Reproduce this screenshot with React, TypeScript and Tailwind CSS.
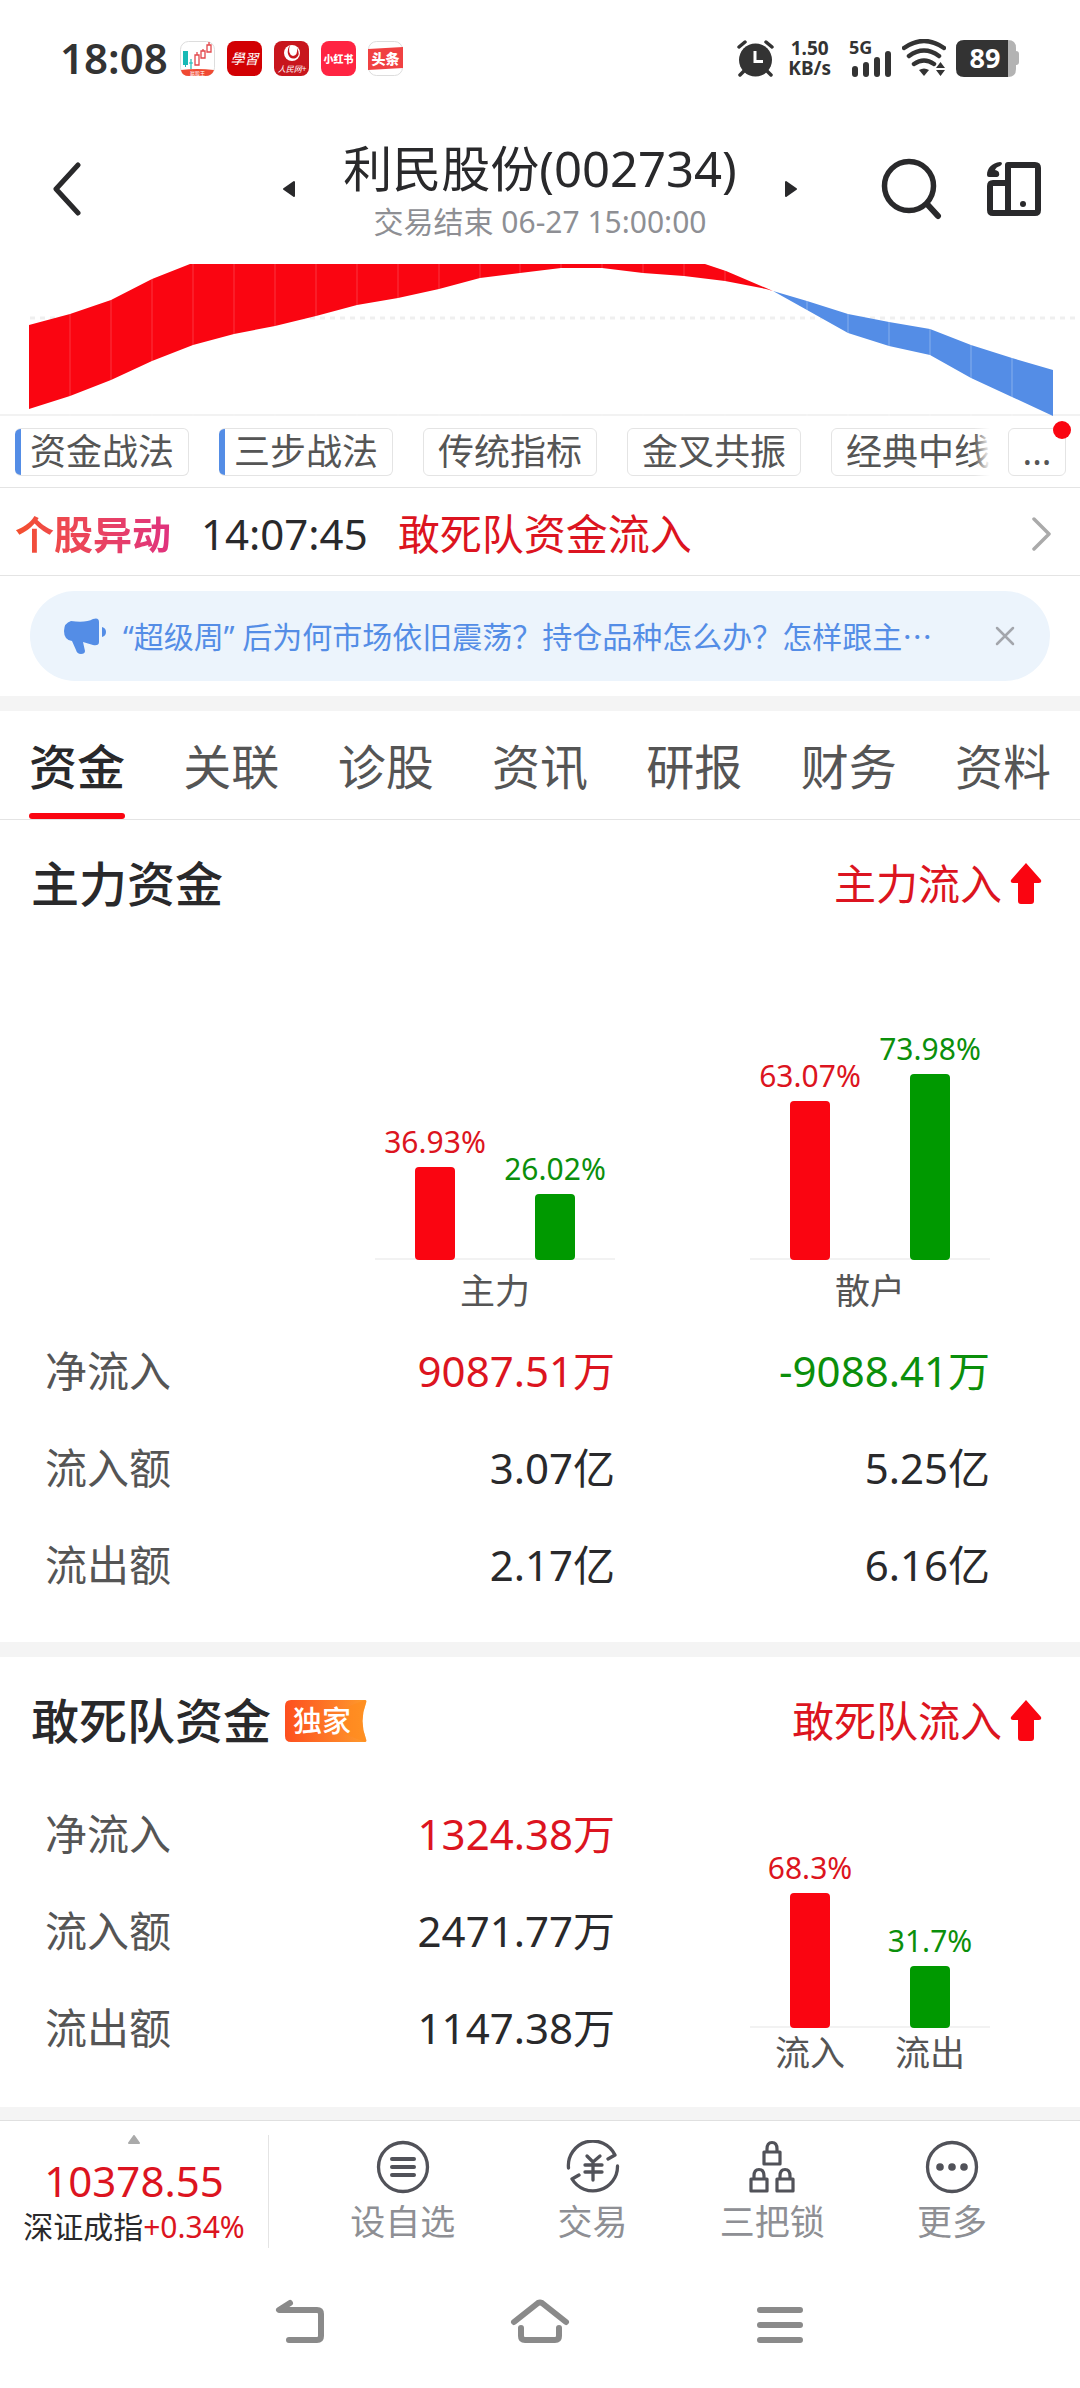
import { useState } from 'react';

const chips = [
  { name: '资金战法', marked: true },
  { name: '三步战法', marked: true },
  { name: '传统指标', marked: false },
  { name: '金叉共振', marked: false },
  { name: '经典中线', marked: false },
];

const tabs = ['资金', '关联', '诊股', '资讯', '研报', '财务', '资料'];

const mainRows = [
  { label: '净流入', main: '9087.51万', retail: '-9088.41万' },
  { label: '流入额', main: '3.07亿', retail: '5.25亿' },
  { label: '流出额', main: '2.17亿', retail: '6.16亿' },
];

const squadRows = [
  { label: '净流入', value: '1324.38万' },
  { label: '流入额', value: '2471.77万' },
  { label: '流出额', value: '1147.38万' },
];

// x positions of the vertical seams in the two areas of the trend chart
const redSeams = [70, 111, 152, 193, 234, 275, 316, 357, 398, 439, 480, 520, 561, 602, 643, 684, 725];
const blueSeams = [807, 848, 889, 930, 971, 1012];

const StatusBar = () => (
  <div className="flex items-center justify-between pl-[60px] pr-[61px] pt-[36px] h-[80px] text-[#333]">
    <div className="flex items-center gap-3">
      <span className="text-[42px] leading-[44px] font-semibold">18:08</span>
      <svg width="35" height="35" viewBox="0 0 35 35">
        <rect x="0.5" y="0.5" width="34" height="34" rx="8" fill="#fff" stroke="#ddd" />
        <path d="M1 29q16-2 33 0-2 6-9 6H9q-7 0-8-6z" fill="#f04a32" />
        <path d="M3 10h5v14H3zM5 24h1v2H5z" fill="#18b9b5" />
        <path d="M11 18v10M9 22h4" stroke="#18b9b5" strokeWidth="1.2" />
        <path d="M15 14h4v10h-4zM21 10h4v7h-4zM27 4h4v7h-4zM17 11v3M23 8v2M29 1v3" fill="none" stroke="#e2484c" strokeWidth="1.3" />
        <text x="17.5" y="34" fontSize="5" fill="#fff" textAnchor="middle">赢股王</text>
      </svg>
      <svg width="35" height="35" viewBox="0 0 35 35">
        <rect width="35" height="35" rx="8" fill="#d20003" />
        <text x="17.5" y="23" fontSize="14" fill="#fff" textAnchor="middle" fontStyle="italic">學習</text>
      </svg>
      <svg width="35" height="35" viewBox="0 0 35 35">
        <rect width="35" height="35" rx="8" fill="#c8161d" />
        <circle cx="18" cy="12" r="8" fill="#fff" />
        <path d="M16 4q-3 9 3 11 5-1 4-8 4 7-1 10-6 2-8-4-1-5 2-9z" fill="#c8161d" />
        <text x="18" y="31" fontSize="8" fill="#fff" textAnchor="middle" fontStyle="italic">人民网+</text>
      </svg>
      <svg width="35" height="35" viewBox="0 0 35 35">
        <rect width="35" height="35" rx="8" fill="#ff2442" />
        <text x="17.5" y="22" fontSize="10" fontWeight="800" fill="#fff" textAnchor="middle">小红书</text>
      </svg>
      <svg width="35" height="35" viewBox="0 0 35 35">
        <rect x="0.5" y="0.5" width="34" height="34" rx="8" fill="#fff" stroke="#ddd" />
        <path d="M0 8l35-2v21L0 29z" fill="#f04142" />
        <text x="17.5" y="23" fontSize="14" fontWeight="800" fill="#fff" textAnchor="middle">头条</text>
      </svg>
    </div>
    <div className="flex items-center">
      <svg width="37" height="37" viewBox="0 0 37 37" className="mr-[14px]">
        <circle cx="18.500" cy="20" r="16.500" fill="#333" />
        <path d="M2 7l6-5M35 7l-6-5M3 35l4-4M34 35l-4-4" stroke="#333" strokeWidth="3.500" strokeLinecap="round" />
        <path d="M18 11v10.500h8" fill="none" stroke="#fff" strokeWidth="3" />
      </svg>
      <div className="flex flex-col text-[19px] leading-[20px] font-bold text-center mr-[18px]">
        <span>1.50</span>
        <span>KB/s</span>
      </div>
      <svg width="43" height="38" viewBox="0 0 43 38" className="mr-[10px] overflow-visible">
        <text x="0" y="15" fontSize="18" fontWeight="700" fill="#333">5G</text>
        <path d="M6 30v5M17 26v9M28 21v14M39 15v20" stroke="#333" strokeWidth="6" strokeLinecap="round" />
      </svg>
      <svg width="44" height="38" viewBox="0 0 44 38" className="mr-[10px]">
        <path d="M2 9q20-14 40 0M7 17q15-11 30 0M12 25q10-7 20 0" fill="none" stroke="#333" strokeWidth="4.500" strokeLinecap="round" />
        <path d="M17 31q5-3 10 0l-5 6z" fill="#333" />
        <path d="M34 29l4.500-6 4.500 6zM34 31l4.500 6 4.500-6z" fill="#333" />
      </svg>
      <svg width="63" height="37" viewBox="0 0 63 37" className="overflow-visible">
        <path d="M50 0h2q8 0 8 8v3q3 0 3 3v8q0 3-3 3v4q0 8-8 8h-2z" fill="#b3b3b3" />
        <path d="M8 0h44v37H8q-8 0-8-8V8q0-8 8-8z" fill="#333" />
        <text x="29" y="28" fontSize="27" fontWeight="700" fill="#fff" textAnchor="middle">89</text>
      </svg>
    </div>
  </div>
);

const UpArrow = () => (
  <svg width="32" height="42" viewBox="0 0 32 42">
    <path d="M16 0l15 17q1 3-2 3h-5v18q0 3-3 3H11q-3 0-3-3V20H3q-3 0-2-3z" fill="#fa0511" />
  </svg>
);

const Bar = ({ percent, scale, up }: { percent: number; scale: number; up: boolean }) => (
  <div className="flex-1 flex flex-col items-center">
    <span className={`text-[30px] leading-[42px] mb-1 ${up ? 'text-[#dc1420]' : 'text-[#0b8f0b]'}`}>
      {percent}%
    </span>
    <div
      className={`w-10 rounded-[4px] ${up ? 'bg-[#fa0511]' : 'bg-[#009900]'}`}
      style={{ height: Math.round(percent * scale) }}
    />
  </div>
);

const BarGroup = ({ up, down, scale }: { up: number; down: number; scale: number }) => (
  <div className="relative flex items-end w-[240px] ml-auto">
    <div className="absolute bottom-0 w-full h-[2px] bg-[#f2f2f2]" />
    <div className="relative flex items-end w-full">
      <Bar percent={up} scale={scale} up />
      <Bar percent={down} scale={scale} up={false} />
    </div>
  </div>
);

const Lock = ({ x, y }: { x: number; y: number }) => (
  <path
    d={`M${x + 2} ${y + 11}h16v12h-16zM${x + 5} ${y + 11}v-3q0-6.500 5-6.500t5 6.500v3`}
    fill="none"
    stroke="#515259"
    strokeWidth="3.200"
    strokeLinejoin="round"
  />
);

const App = () => {
  const [activeTab, setActiveTab] = useState('资金');
  const [showNotice, setShowNotice] = useState(true);

  return (
    <div className="min-h-screen bg-white text-[#29292b] overflow-x-hidden font-['Noto_Sans','Noto_Sans_CJK_SC',sans-serif]">
      <StatusBar />

      {/* Title */}
      <header className="relative flex items-center justify-between h-[184px] pt-[34px] pl-[52px] pr-[39px]">
        <button aria-label="返回">
          <svg width="30" height="54" viewBox="0 0 30 54">
            <path d="M26 3L4 27l22 24" fill="none" stroke="#29292b" strokeWidth="5" strokeLinecap="round" strokeLinejoin="round" />
          </svg>
        </button>
        <div className="absolute inset-x-0 mx-auto w-fit flex items-center gap-[48px]">
          <button aria-label="上一只">
            <svg width="12" height="18" viewBox="0 0 12 18">
              <path d="M11 2v14L1 9z" fill="#29292b" stroke="#29292b" strokeWidth="2" strokeLinejoin="round" />
            </svg>
          </button>
          <div className="pt-1 text-center">
            <h1 className="text-[49px] leading-[62px]">利民股份(002734)</h1>
            <p className="text-[30px] leading-[46px] text-[#8e8f94]">交易结束 06-27 15:00:00</p>
          </div>
          <button aria-label="下一只">
            <svg width="12" height="18" viewBox="0 0 12 18">
              <path d="M1 2v14l10-7z" fill="#29292b" stroke="#29292b" strokeWidth="2" strokeLinejoin="round" />
            </svg>
          </button>
        </div>
        <div className="flex items-center gap-[44px]">
          <button aria-label="搜索">
            <svg width="62" height="62" viewBox="0 0 62 62">
              <circle cx="28" cy="28" r="24.500" fill="none" stroke="#29292b" strokeWidth="5.500" />
              <path d="M46 46l11 12" stroke="#29292b" strokeWidth="6" strokeLinecap="round" />
            </svg>
          </button>
          <button aria-label="持仓">
            <svg width="54" height="54" viewBox="0 0 54 54">
              <path d="M21 3h27q3 0 3 3v42q0 3-3 3H21zM21 21H6q-3 0-3 3v24q0 3 3 3h15" fill="none" stroke="#29292b" strokeWidth="6" strokeLinejoin="round" />
              <circle cx="36" cy="42" r="3" fill="#29292b" />
              <path d="M13 0C5 1 0 6 0 13q0 2 2 2h8q3-1 2-4 0-2-4-3 1-3 5-4 2-1 2-3-1-1-2-1z" fill="#29292b" />
            </svg>
          </button>
        </div>
      </header>

      {/* Trend chart */}
      <svg viewBox="0 0 1080 152" className="block w-full">
        <path d="M30 54H1080" stroke="#efefef" strokeWidth="3" strokeDasharray="5 5" />
        <path d="M0 151H1080" stroke="#f2f2f2" strokeWidth="2" />
        <path
          d="M29 61L70 50 111 36 152 15 190 0H705L726 7 773 27 766 25 725 17 684 12 643 9 602 4H561L520 9 480 14 439 25 398 34 357 41 316 52 275 62 234 70 193 81 152 97 111 116 70 132 29 145z"
          fill="#fa0511"
        />
        <path
          d="M773 27L807 37 848 50 889 58 930 65 971 81 1012 94 1053 106V152L1012 133 971 114 930 91 889 82 848 69 807 46z"
          fill="#548de6"
        />
        {redSeams.map((x) => (
          <path key={x} d={`M${x} 0V152`} stroke="#fff" strokeOpacity="0.200" />
        ))}
        {blueSeams.map((x) => (
          <path key={x} d={`M${x} 0V152`} stroke="#fff" strokeOpacity="0.300" />
        ))}
      </svg>

      {/* Indicator chips */}
      <div className="relative flex items-center justify-between h-[72px] pl-[15px] pr-[14px] border-b border-[#e4e4e4]">
        <div className="relative flex-1 min-w-0 overflow-hidden flex gap-[30px] mr-[18px]">
          {chips.map((chip) => (
            <button
              key={chip.name}
              className={`shrink-0 h-12 text-[36px] leading-[46px] text-[#555] rounded-[6px] border border-[#e4e4e4] ${
                chip.marked
                  ? 'border-l-0 pl-[15px] pr-[14px] bg-[linear-gradient(90deg,#548de6_6px,transparent_6px)]'
                  : 'px-[14px]'
              }`}
            >
              {chip.name}
            </button>
          ))}
          <div className="absolute right-0 top-0 h-12 w-4 bg-linear-to-r from-transparent to-white" />
        </div>
        <button className="w-[58px] h-12 text-[36px] leading-[46px] text-[#555] rounded-[6px] border border-[#e4e4e4]">
          ...
        </button>
        <span className="absolute right-[9px] top-[5px] size-[18px] rounded-full bg-[#fa0511]" />
      </div>

      {/* Stock alert */}
      <a href="#alert" className="flex items-center h-[88px] pt-1 pl-[15px] pr-7 border-b border-[#e4e4e4] text-[42px] leading-[60px]">
        <span className="text-[39px] font-bold bg-linear-to-r from-[#f4502c] to-[#e0327e] bg-clip-text text-transparent">
          个股异动
        </span>
        <span className="ml-[30px]">14:07:45</span>
        <span className="ml-[30px] text-[#dc1420]">敢死队资金流入</span>
        <svg width="20" height="34" viewBox="0 0 20 34" className="ml-auto">
          <path d="M2 2l15 15L2 32" fill="none" stroke="#aaa" strokeWidth="3.500" strokeLinecap="round" strokeLinejoin="round" />
        </svg>
      </a>

      {/* Notice */}
      <div className="h-[120px] px-[30px] py-[15px]">
        {showNotice && (
          <div className="flex items-center h-[90px] rounded-full bg-[#ecf4fc] pl-[34px] pr-[34px]">
            <svg width="43" height="36" viewBox="0 0 43 36" className="shrink-0">
              <path d="M7 3Q22 5 29 1q6-2 6 3v20q0 4-6 3l-10-3 2 9q0 3-4 3-4 0-5-4L8 23Q0 22 0 13 0 5 7 3zM38 9q4 1 4 5t-4 5z" fill="#548de6" />
            </svg>
            <p className="flex-1 min-w-0 ml-4 text-[30px] leading-[42px] text-[#548de6] whitespace-nowrap overflow-hidden font-['Noto_Sans_CJK_SC',sans-serif]">
              <span className="font-['Noto_Sans']">“</span>超级周<span className="font-['Noto_Sans']">” </span>后为何市场依旧震荡？持仓品种怎么办？怎样跟主…
            </p>
            <button aria-label="关闭" onClick={() => setShowNotice(false)}>
              <svg width="22" height="22" viewBox="0 0 22 22">
                <path d="M3 3l16 16M19 3L3 19" stroke="#a3a6ac" strokeWidth="2.500" strokeLinecap="round" />
              </svg>
            </button>
          </div>
        )}
      </div>

      <div className="h-[15px] bg-[#f4f4f4]" />

      {/* Tabs */}
      <nav className="flex justify-between h-[109px] px-[29px] border-b border-[#e4e4e4]">
        {tabs.map((tab) => (
          <button
            key={tab}
            onClick={() => setActiveTab(tab)}
            className={`relative pt-1 text-[48px] leading-[60px] ${
              activeTab === tab ? 'font-medium text-[#29292b]' : 'text-[#555]'
            }`}
          >
            {tab}
            {activeTab === tab && (
              <span className="absolute inset-x-0 bottom-0 h-[6px] rounded-full bg-[#fa0511]" />
            )}
          </button>
        ))}
      </nav>

      {/* Main capital */}
      <section>
        <div className="flex items-center justify-between h-[128px] pl-[31px] pr-[38px]">
          <h2 className="text-[48px] leading-[60px] font-medium">主力资金</h2>
          <div className="flex items-center gap-2 text-[42px] leading-[60px] text-[#dc1420]">
            主力流入
            <UpArrow />
          </div>
        </div>
        <table className="w-full table-fixed">
          <thead>
            <tr className="align-bottom">
              <td className="w-[240px]" />
              <th scope="col" className="p-0 font-normal h-[374px]">
                <BarGroup up={36.93} down={26.02} scale={2.52} />
                <div className="w-[240px] ml-auto text-center text-[35px] leading-[62px] text-[#555]">主力</div>
              </th>
              <th scope="col" className="p-0 font-normal">
                <BarGroup up={63.07} down={73.98} scale={2.52} />
                <div className="w-[240px] ml-auto text-center text-[35px] leading-[62px] text-[#555]">散户</div>
              </th>
              <td className="w-[90px]" />
            </tr>
          </thead>
          <tbody className="text-[42px] leading-[60px]">
            {mainRows.map((row, i) => (
              <tr key={row.label} className="h-[97px]">
                <th scope="row" className="p-0 pl-[45px] text-left font-normal text-[#555]">
                  {row.label}
                </th>
                <td className={`p-0 text-right ${i === 0 ? 'text-[#dc1420]' : ''}`}>{row.main}</td>
                <td className={`p-0 text-right ${i === 0 ? 'text-[#0b8f0b]' : ''}`}>{row.retail}</td>
                <td />
              </tr>
            ))}
          </tbody>
        </table>
      </section>

      <div className="mt-[29px] h-[15px] bg-[#f4f4f4]" />

      {/* Squad capital */}
      <section>
        <div className="flex items-center justify-between h-[128px] pl-[31px] pr-[38px]">
          <div className="flex items-center gap-[14px]">
            <h2 className="text-[48px] leading-[60px] font-medium">敢死队资金</h2>
            <svg width="82" height="42" viewBox="0 0 82 42">
              <defs>
                <linearGradient id="tag" x1="0" y1="0" x2="1" y2="0">
                  <stop offset="0" stopColor="#fd4f1f" />
                  <stop offset="1" stopColor="#fe9a2c" />
                </linearGradient>
              </defs>
              <path d="M6 0h74q2 0 1 3-7 18 0 36 1 3-1 3H6q-6 0-6-6V6q0-6 6-6z" fill="url(#tag)" />
              <path d="M60 8L80 0q2 0 1 3-7 18 0 36 1 3-1 3L60 34z" fill="#ff8a1c" fillOpacity="0.600" />
              <text x="37" y="32" fontSize="29" fontWeight="500" fill="#fff" textAnchor="middle">独家</text>
            </svg>
          </div>
          <div className="flex items-center gap-2 text-[42px] leading-[60px] text-[#dc1420]">
            敢死队流入
            <UpArrow />
          </div>
        </div>
        <div className="flex h-[293px]">
          <table className="flex-1 h-fit text-[42px] leading-[60px]">
            <tbody>
              {squadRows.map((row, i) => (
                <tr key={row.label} className="h-[97px]">
                  <th scope="row" className="p-0 pl-[45px] text-left font-normal text-[#555]">
                    {row.label}
                  </th>
                  <td className={`p-0 text-right ${i === 0 ? 'text-[#dc1420]' : ''}`}>{row.value}</td>
                </tr>
              ))}
            </tbody>
          </table>
          <div className="self-end w-[465px] pr-[90px]">
            <BarGroup up={68.3} down={31.7} scale={1.97} />
            <div className="flex w-[240px] ml-auto text-center text-[35px] leading-[50px] text-[#555]">
              <span className="flex-1">流入</span>
              <span className="flex-1">流出</span>
            </div>
          </div>
        </div>
      </section>

      <div className="mt-[29px] h-[13px] bg-[#f4f4f4]" />

      {/* Bottom bar */}
      <footer className="flex h-[136px] border-t border-[#e0e0e0]">
        <a href="#index" className="mt-[14px] mb-2 w-[269px] flex flex-col items-center border-r border-[#e4e4e4]">
          <svg width="14" height="10" viewBox="0 0 14 10" className="shrink-0">
            <path d="M7 1l5 7H2z" fill="#aaa" stroke="#aaa" strokeWidth="2" strokeLinejoin="round" />
          </svg>
          <span className="mt-2 text-[42px] leading-[56px] text-[#dc1420]">10378.55</span>
          <span className="text-[30px] leading-[36px]">
            深证成指<span className="text-[#dc1420]">+0.34%</span>
          </span>
        </a>
        <div className="flex-1 grid grid-cols-[10fr_9fr_9fr_9fr] pl-[34px] pr-[38px] pt-[19px] text-[35px] leading-[56px] text-[#8e8f94]">
          <button className="flex flex-col items-center">
            <svg width="54" height="54" viewBox="0 0 54 54">
              <circle cx="27" cy="27" r="24.500" fill="none" stroke="#515259" strokeWidth="3.300" />
              <path d="M16 19h22M16 27h22M16 35h22" stroke="#515259" strokeWidth="4" strokeLinecap="round" />
            </svg>
            设自选
          </button>
          <button className="flex flex-col items-center">
            <svg width="54" height="54" viewBox="0 0 54 54" fill="none" stroke="#515259" strokeWidth="3.300" strokeLinecap="round" strokeLinejoin="round">
              <path d="M2.500 28A24.500 24.500 0 0 1 49 15l-7 4M51.500 26A24.500 24.500 0 0 1 6 39l7-4" />
              <path d="M21 16l6 6 7-6M19 25h17M19 32h17M27 23v17" />
            </svg>
            交易
          </button>
          <button className="flex flex-col items-center">
            <svg width="54" height="54" viewBox="0 0 54 54">
              <Lock x={17} y={1} />
              <Lock x={4} y={28} />
              <Lock x={30} y={28} />
            </svg>
            三把锁
          </button>
          <button className="flex flex-col items-center">
            <svg width="54" height="54" viewBox="0 0 54 54">
              <circle cx="27" cy="27" r="24.500" fill="none" stroke="#515259" strokeWidth="3.300" />
              <circle cx="15" cy="27" r="3.800" fill="#515259" />
              <circle cx="27" cy="27" r="3.800" fill="#515259" />
              <circle cx="39" cy="27" r="3.800" fill="#515259" />
            </svg>
            更多
          </button>
        </div>
      </footer>

      {/* System navigation */}
      <nav className="grid grid-cols-3 w-2/3 mx-auto h-[131px] items-center justify-items-center">
        <button aria-label="后退">
          <svg width="50" height="46" viewBox="0 0 50 46" fill="none" stroke="#8a8a8a" strokeWidth="6" strokeLinecap="round" strokeLinejoin="round">
            <path d="M15 4L4 11h38q4 0 4 4v22q0 4-4 4H14" />
          </svg>
        </button>
        <button aria-label="主页">
          <svg width="60" height="46" viewBox="0 0 60 46" fill="none" stroke="#8a8a8a" strokeWidth="6" strokeLinecap="round" strokeLinejoin="round">
            <path d="M4 23L28 4q2-1 4 0l24 19M11 29v8q0 4 4 4h30q4 0 4-4v-8" />
          </svg>
        </button>
        <button aria-label="最近任务">
          <svg width="50" height="46" viewBox="0 0 50 46" stroke="#8a8a8a" strokeWidth="6" strokeLinecap="round">
            <path d="M5 11h40M5 26h40M5 41h40" />
          </svg>
        </button>
      </nav>
    </div>
  );
};

export default App;
